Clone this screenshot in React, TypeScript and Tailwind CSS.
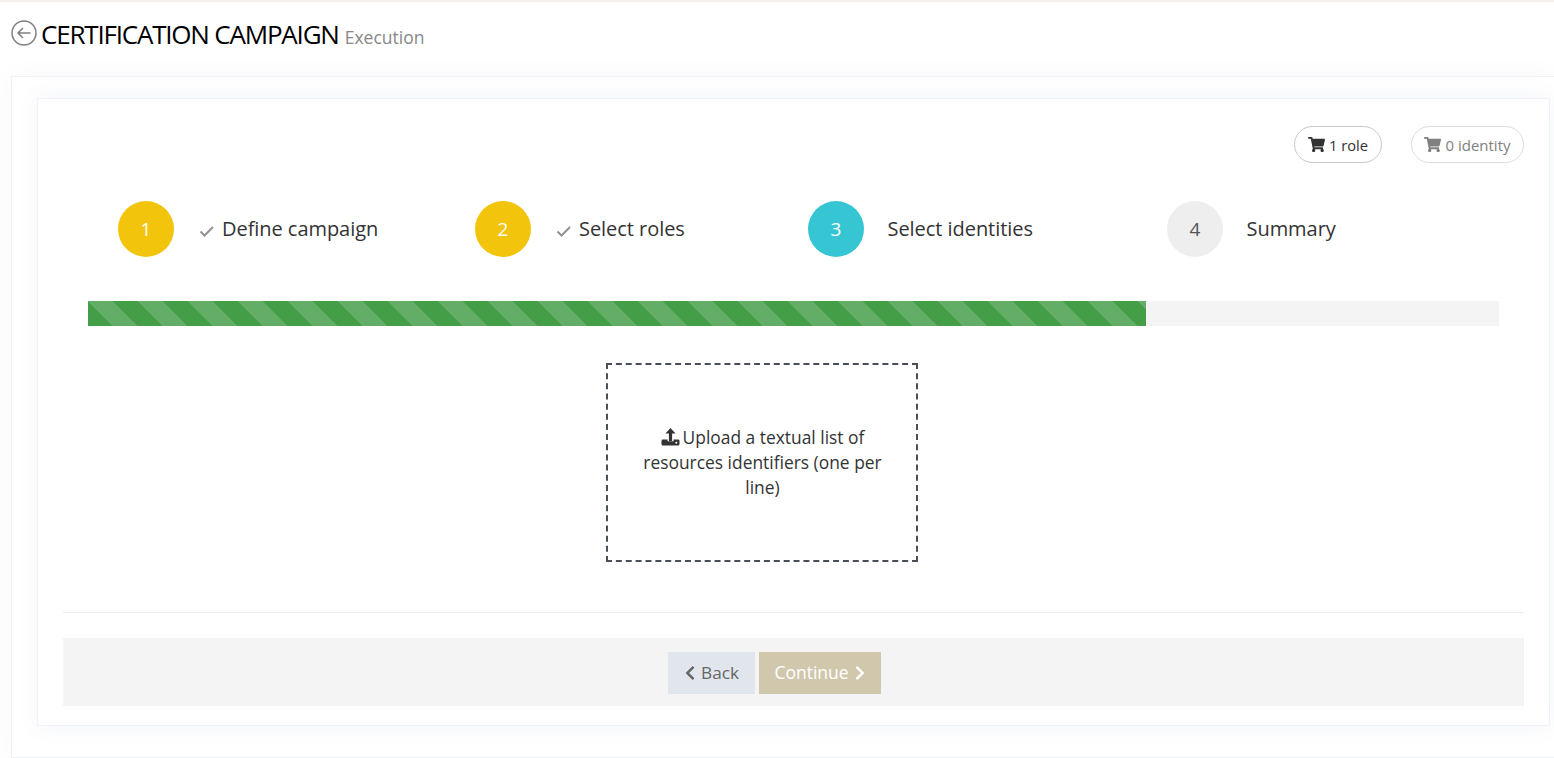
import { FaChevronLeft, FaChevronRight, FaShoppingCart } from "react-icons/fa";

const steps = [
  { num: "1", label: "Define campaign", done: true, circle: "bg-[#f2c50c] text-white", width: "w-[357px]" },
  { num: "2", label: "Select roles", done: true, circle: "bg-[#f2c50c] text-white", width: "w-[333px]" },
  { num: "3", label: "Select identities", done: false, circle: "bg-[#36c6d3] text-white", width: "w-[359px]" },
  { num: "4", label: "Summary", done: false, circle: "bg-[#eeeeee] text-[#555555]", width: "w-[300px]" },
];

function StepCheck() {
  return (
    <svg width="16" height="12" viewBox="0 0 16 12" fill="none" className="mt-[3px] mr-[7px] shrink-0">
      <path d="M1.5 6.5L5.5 10.5L14 2" stroke="#8f9399" strokeWidth="2" />
    </svg>
  );
}

export default function App() {
  return (
    <div className="h-[758px] overflow-hidden bg-white font-['Open_Sans',sans-serif] text-[#333333]">
      <div className="h-[2px] bg-[#f4f1ef]" />

      {/* page title */}
      <div className="flex h-[74px] items-start pl-[11px] pt-[18px]">
        <svg width="26" height="26" viewBox="0 0 26 26" fill="none" className="shrink-0">
          <circle cx="13" cy="13" r="12" stroke="#7f7f7f" strokeWidth="1.5" />
          <path d="M19.5 13H7M12 8L7 13L12 18" stroke="#7f7f7f" strokeWidth="1.5" />
        </svg>
        <h1 className="-mt-[1px] ml-[4px] text-[26px] leading-[30px] tracking-[-1.2px] text-black">CERTIFICATION CAMPAIGN</h1>
        <span className="ml-[6px] mt-[5px] text-[17.5px] leading-[24px] text-[#888888]">Execution</span>
      </div>

      {/* outer panel */}
      <div className="ml-[11px] h-[682px] border border-r-0 border-[#eef1f6] bg-white pl-[25px] pt-[21px] shadow-[0_0_20px_rgba(90,110,160,0.05)]">
        <div className="mr-[4px] h-[628px] border border-[#eef1f6] bg-white px-[25px] pt-[27px] shadow-[0_0_20px_rgba(90,110,160,0.08)]">
          {/* cart pills */}
          <div className="flex justify-end gap-[29px]">
            <div className="flex h-[37px] w-[88px] items-center justify-center gap-[4px] rounded-full border border-[#c8c8c8] text-[14.7px] text-[#333333]">
              <FaShoppingCart className="text-[17px]" />
              <span className="pt-[1px]">1 role</span>
            </div>
            <div className="flex h-[37px] w-[113px] items-center justify-center gap-[4px] rounded-full border border-[#dddddd] text-[15px] text-[#808080]">
              <FaShoppingCart className="text-[17px]" />
              <span className="pt-[1px]">0 identity</span>
            </div>
          </div>

          {/* steps */}
          <div className="mt-[38px] flex h-[56px] pl-[55px]">
            {steps.map((step) => (
              <div key={step.num} className={`flex shrink-0 items-center ${step.width}`}>
                <div className={`flex h-[56px] w-[56px] shrink-0 items-center justify-center rounded-full text-[19px] ${step.circle}`}>
                  {step.num}
                </div>
                <div className={`flex items-center text-[20px] leading-[28px] tracking-[-0.05px] ${step.done ? "ml-[25px]" : "ml-[23.5px]"}`}>
                  {step.done && <StepCheck />}
                  <span>{step.label}</span>
                </div>
              </div>
            ))}
          </div>

          {/* progress */}
          <div className="mx-[25px] mt-[44px] h-[25px] bg-[#f4f4f4]">
            <div className="h-full w-[75%] bg-[#439e47] bg-[linear-gradient(45deg,rgba(255,255,255,.17)_25%,transparent_25%,transparent_50%,rgba(255,255,255,.17)_50%,rgba(255,255,255,.17)_75%,transparent_75%,transparent)] bg-[length:50px_50px]" />
          </div>

          {/* upload box */}
          <div className="mt-[37px] flex justify-center pr-[64px]">
            <div className="flex h-[199px] w-[312px] items-center justify-center border-2 border-dashed border-[#4a4f57] pb-[1px] pl-[31px] pr-[29px] text-center text-[17.4px] leading-[25px]">
              <div>
                <svg width="19" height="18" viewBox="0 0 18 18" className="mr-[3px] inline-block align-[-2px]" fill="#333333">
                  <path d="M9 0L14 5.4H10.6V13H7.4V5.4H4Z" />
                  <path d="M1.5 11.5H6V13.2H12V11.5H16.5C17.4 11.5 18 12.2 18 13V16C18 16.9 17.4 17.5 16.5 17.5H1.5C.6 17.5 0 16.9 0 16V13C0 12.2.6 11.5 1.5 11.5Z" />
                  <circle cx="14.8" cy="14.8" r="1" fill="#ffffff" />
                </svg>
                Upload a textual list of resources identifiers (one per line)
              </div>
            </div>
          </div>

          <div className="mt-[50px] h-px bg-[#eeeeee]" />

          {/* footer buttons */}
          <div className="mt-[25px] flex h-[68px] items-start justify-center gap-[4px] bg-[#f4f4f4] pr-[38px] pt-[14px]">
            <button className="flex h-[42px] w-[87px] items-center justify-center gap-[3px] bg-[#e1e5ec] pb-[1px] pr-[2px] text-[17.2px] text-[#666666]">
              <FaChevronLeft className="text-[16px]" />
              Back
            </button>
            <button className="flex h-[42px] w-[122px] items-center justify-center gap-[3px] bg-[#d1c7ad] pb-[1px] pl-[2px] text-[17.5px] text-white">
              Continue
              <FaChevronRight className="text-[16px]" />
            </button>
          </div>
        </div>
      </div>
    </div>
  );
}
